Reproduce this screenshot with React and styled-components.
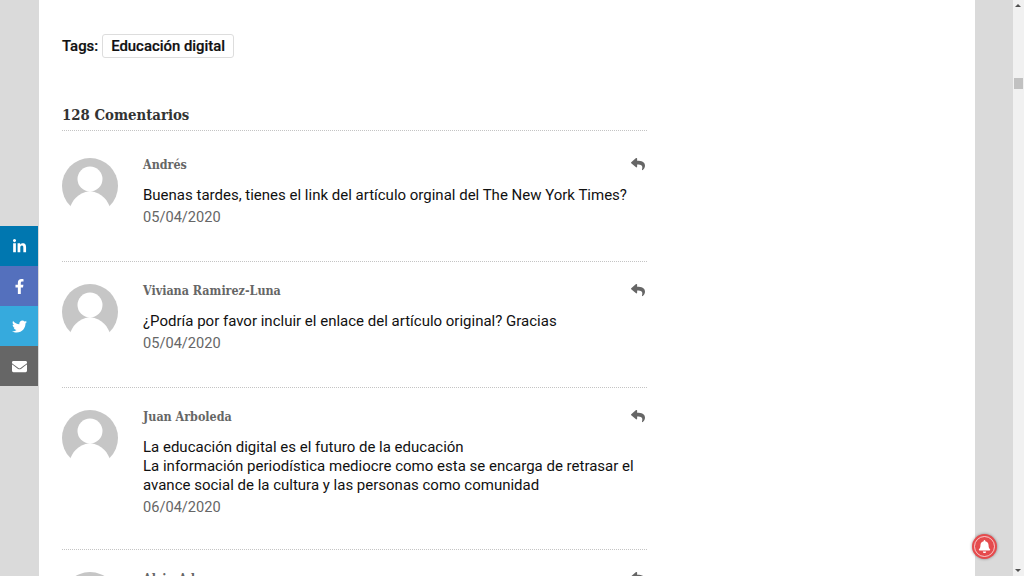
import React from "react";
import styled, { createGlobalStyle } from "styled-components";
import { FaLinkedinIn, FaFacebookF, FaTwitter, FaEnvelope, FaReply, FaBell } from "react-icons/fa";

const GlobalStyle = createGlobalStyle`
  html, body {
    margin: 0;
    padding: 0;
    height: 100%;
    overflow: hidden;
    font-family: Roboto, "Liberation Sans", sans-serif;
  }
`;

const Shell = styled.div`
  display: flex;
  height: 576px;
  overflow: hidden;
  background: #dadada;
`;

const Page = styled.div`
  flex: 1;
  padding: 0 38px 0 39px;
  min-width: 0;
`;

const Sheet = styled.main`
  background: #fff;
  height: 576px;
  overflow: hidden;
  padding: 34px 0 0 23px;
  box-sizing: border-box;
`;

const Column = styled.div`
  width: 585px;
`;

const TagRow = styled.div`
  display: flex;
  align-items: center;
  gap: 4px;
  height: 24px;
  font-size: 14.9px;
  font-weight: 500;
  color: #111;
  -webkit-text-stroke: 0.2px #111;
`;

const Tag = styled.a`
  display: flex;
  align-items: center;
  height: 24px;
  box-sizing: border-box;
  padding: 0 8px;
  border: 1px solid #ddd;
  border-radius: 3px;
  color: #111;
`;

const Heading = styled.h3`
  margin: 46px 0 0;
  padding-bottom: 5px;
  height: 21px;
  line-height: 21px;
  font-family: "DejaVu Serif", "Liberation Serif", serif;
  font-size: 14.8px;
  font-stretch: condensed;
  font-weight: 700;
  color: #333;
  border-bottom: 1px dotted #c4c4c4;
`;

const Comment = styled.article`
  display: flex;
  gap: 25px;
  padding: ${(props) => (props.first ? "27px" : "22px")} 0 ${(props) => props.bottom}px;
  border-bottom: 1px dotted #c4c4c4;
`;

const Avatar = styled.svg`
  flex: none;
  width: 56px;
  height: 56px;
`;

const Body = styled.div`
  flex: 1;
  min-width: 0;
`;

const Meta = styled.div`
  display: flex;
  justify-content: space-between;
  align-items: center;
  height: 12px;
`;

const Author = styled.span`
  font-family: "DejaVu Serif", "Liberation Serif", serif;
  font-size: 12.4px;
  font-stretch: condensed;
  font-weight: 700;
  color: #666;
`;

const ReplyIcon = styled(FaReply)`
  width: 16px;
  height: 14px;
  margin-right: 1px;
  color: #666;
`;

const Text = styled.p`
  margin: 16px 0 0;
  font-size: 15px;
  line-height: 19px;
  color: #111;
`;

const Date = styled.div`
  margin-top: 3px;
  font-size: 14.6px;
  line-height: 19px;
  color: #666;
`;

const Share = styled.nav`
  position: fixed;
  left: 0;
  top: 226px;
  display: flex;
  flex-direction: column;
`;

const ShareButton = styled.a`
  display: flex;
  align-items: center;
  justify-content: center;
  width: 38px;
  height: 40px;
  font-size: 15px;
  color: #fff;
  background: ${(props) => props.color};
`;

const Scrollbar = styled.div`
  flex: none;
  position: relative;
  width: 11px;
  background: #f1f1f1;
`;

const Arrow = styled.div`
  position: absolute;
  left: 2px;
  width: 0;
  height: 0;
  border-left: 3.5px solid transparent;
  border-right: 3.5px solid transparent;
  ${(props) => (props.down ? "bottom: 4px; border-top: 3px solid #505050;" : "top: 4px; border-bottom: 3px solid #505050;")}
`;

const Thumb = styled.div`
  position: absolute;
  top: 78px;
  left: 1px;
  width: 9px;
  height: 11px;
  background: #c1c1c1;
`;

const Bell = styled.div`
  position: fixed;
  left: 972px;
  top: 534px;
  width: 25px;
  height: 25px;
  display: flex;
  align-items: center;
  justify-content: center;
  border-radius: 50%;
  background: #e54b4d;
  box-shadow: 0 0 3px rgba(0, 0, 0, 0.4);
  color: #fff;
  font-size: 13px;

  &::after {
    content: "";
    position: absolute;
    inset: 2px;
    border: 1px solid rgba(255, 255, 255, 0.7);
    border-radius: 50%;
  }
`;

const AvatarImage = () => (
  <Avatar viewBox="0 0 56 56">
    <circle cx="28" cy="28" r="28" fill="#c6c6c6" />
    <circle cx="28" cy="21" r="12.5" fill="#fff" />
    <path d="M8 56V50C10 43 15 35 28 33C41 35 46 43 48 50V56Z" fill="#fff" />
  </Avatar>
);

const comments = [
  {
    author: "Andrés",
    date: "05/04/2020",
    bottom: 34,
    lines: ["Buenas tardes, tienes el link del artículo orginal del The New York Times?"],
  },
  {
    author: "Viviana Ramirez-Luna",
    date: "05/04/2020",
    bottom: 34,
    lines: ["¿Podría por favor incluir el enlace del artículo original? Gracias"],
  },
  {
    author: "Juan Arboleda",
    date: "06/04/2020",
    bottom: 32,
    lines: [
      "La educación digital es el futuro de la educación",
      "La información periodística mediocre como esta se encarga de retrasar el avance social de la cultura y las personas como comunidad",
    ],
  },
  { author: "Alvin Ada", date: "", bottom: 34, lines: [] },
];

export default function App() {
  return (
    <Shell>
      <GlobalStyle />
      <Page>
        <Sheet>
          <Column>
            <TagRow>
              Tags: <Tag>Educación digital</Tag>
            </TagRow>
            <Heading>128 Comentarios</Heading>
            {comments.map((comment, i) => (
              <Comment key={comment.author} first={i === 0 ? true : undefined} bottom={comment.bottom}>
                <AvatarImage />
                <Body>
                  <Meta>
                    <Author>{comment.author}</Author>
                    <ReplyIcon />
                  </Meta>
                  <Text>
                    {comment.lines.map((line) => (
                      <React.Fragment key={line}>
                        {line}
                        <br />
                      </React.Fragment>
                    ))}
                  </Text>
                  <Date>{comment.date}</Date>
                </Body>
              </Comment>
            ))}
          </Column>
        </Sheet>
      </Page>
      <Scrollbar>
        <Arrow />
        <Thumb />
        <Arrow down />
      </Scrollbar>
      <Share>
        <ShareButton color="#0077b0"><FaLinkedinIn /></ShareButton>
        <ShareButton color="#5470bd"><FaFacebookF /></ShareButton>
        <ShareButton color="#36aadd"><FaTwitter /></ShareButton>
        <ShareButton color="#666666"><FaEnvelope /></ShareButton>
      </Share>
      <Bell><FaBell /></Bell>
    </Shell>
  );
}
